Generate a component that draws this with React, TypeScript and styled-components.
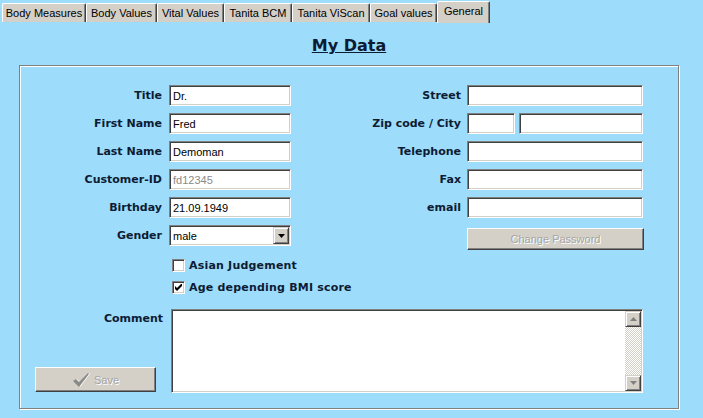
import React from 'react';
import styled, { createGlobalStyle } from 'styled-components';

const BLUE = '#9ddcfa';
const FACE = '#d4d0c8';
const INK = '#0d1b34';

const Global = createGlobalStyle`
  html, body { margin: 0; padding: 0; background: ${BLUE}; }
  body { width: 703px; height: 418px; overflow: hidden; }
`;

const Window = styled.div`
  width: 703px;
  height: 418px;
  background: ${BLUE};
  display: flex;
  flex-direction: column;
  font-family: "Liberation Sans", Arial, sans-serif;
  font-size: 11px;
  color: #000;
`;

const TabBar = styled.div`
  display: flex;
  align-items: flex-start;
  height: 23px;
  padding-left: 2px;
  box-sizing: border-box;
`;

const Tab = styled.div<{ $w: number; $active?: boolean }>`
  width: ${p => p.$w}px;
  box-sizing: border-box;
  height: ${p => (p.$active ? 22 : 19)}px;
  margin-top: ${p => (p.$active ? 1 : 3)}px;
  padding-bottom: ${p => (p.$active ? 3 : 0)}px;
  background: ${FACE};
  border-top: 1px solid #fff;
  border-left: 1px solid #fff;
  border-right: 1px solid #404040;
  box-shadow: inset -1px 0 0 #808080;
  border-radius: 2px 2px 0 0;
  display: flex;
  align-items: center;
  justify-content: center;
  white-space: nowrap;
  font-size: 11px;
`;

const Panel = styled.div`
  flex: 1;
  display: flex;
  flex-direction: column;
  padding: 13px 24px 0 19px;
`;

const Heading = styled.h1`
  margin: 0;
  width: 660px;
  text-align: center;
  font: bold 16px/19px "DejaVu Sans", sans-serif;
  text-decoration: underline;
  color: ${INK};
`;

const GroupBox = styled.div`
  margin-top: 10px;
  width: 660px;
  height: 344px;
  box-sizing: border-box;
  border: 1px solid #808080;
  box-shadow: 1px 1px 0 #fff, inset 1px 1px 0 #fff;
  padding-top: 19px;
  display: flex;
  flex-direction: column;
`;

const FieldsGrid = styled.div`
  display: grid;
  grid-template-columns: 149px 122px 176px 176px;
  grid-auto-rows: 21px;
  row-gap: 7px;
`;

const Label = styled.div<{ $pad: number }>`
  display: flex;
  align-items: center;
  justify-content: flex-end;
  padding-right: ${p => p.$pad}px;
  font: bold 11px "DejaVu Sans", sans-serif;
  color: ${INK};
  white-space: nowrap;
`;

const Sunken = styled.div<{ $w?: number; $disabled?: boolean }>`
  box-sizing: border-box;
  height: 21px;
  width: ${p => (p.$w ? `${p.$w}px` : '100%')};
  background: #fff;
  border: 1px solid;
  border-color: #808080 #fff #fff #808080;
  box-shadow: inset 1px 1px 0 #404040, inset -1px -1px 0 ${FACE};
  display: flex;
  align-items: center;
  padding-left: 3px;
  color: ${p => (p.$disabled ? '#8a8a8a' : '#000')};
  font-size: 11px;
  overflow: hidden;
`;

const Pair = styled.div`
  display: flex;
  gap: 4px;
`;

const DropButton = styled.div`
  margin-left: auto;
  margin-right: 1px;
  width: 16px;
  height: 17px;
  box-sizing: border-box;
  background: ${FACE};
  border: 1px solid;
  border-color: ${FACE} #404040 #404040 ${FACE};
  box-shadow: inset 1px 1px 0 #fff, inset -1px -1px 0 #808080;
  display: flex;
  align-items: center;
  justify-content: center;
`;

const Button = styled.div<{ $w: number; $h: number }>`
  box-sizing: border-box;
  width: ${p => p.$w}px;
  height: ${p => p.$h}px;
  background: ${FACE};
  border: 1px solid;
  border-color: #fff #404040 #404040 #fff;
  box-shadow: inset -1px -1px 0 #808080;
  display: flex;
  align-items: center;
  justify-content: center;
  gap: 4px;
  color: #a8a49e;
  text-shadow: 1px 1px 0 #fff;
  font-size: 11px;
`;

const PasswordButton = styled(Button)`
  margin-top: 3px;
`;

const Options = styled.div`
  margin-top: 12px;
  padding-left: 152px;
  display: flex;
  flex-direction: column;
  gap: 7px;
`;

const Option = styled.label`
  display: flex;
  align-items: center;
  gap: 4px;
  height: 15px;
  font: bold 11px "DejaVu Sans", sans-serif;
  letter-spacing: 0.2px;
  color: ${INK};
`;

const CheckBox = styled.span`
  box-sizing: border-box;
  width: 13px;
  height: 13px;
  background: #fff;
  border: 1px solid;
  border-color: #808080 #fff #fff #808080;
  box-shadow: inset 1px 1px 0 #404040, inset -1px -1px 0 ${FACE};
  display: flex;
  align-items: center;
  justify-content: center;
`;

const CommentRow = styled.div`
  margin-top: 14px;
  display: grid;
  grid-template-columns: 151px 472px;
  height: 84px;
`;

const CommentSide = styled.div`
  display: flex;
  flex-direction: column;
  justify-content: space-between;
`;

const CommentLabel = styled(Label)`
  align-self: stretch;
  padding-top: 3px;
`;

const SaveButton = styled(Button)`
  margin-left: 15px;
  margin-bottom: 1px;
`;

const TextArea = styled.div`
  box-sizing: border-box;
  height: 84px;
  background: #fff;
  border: 1px solid;
  border-color: #808080 #fff #fff #808080;
  box-shadow: inset 1px 1px 0 #404040, inset -1px -1px 0 ${FACE};
  display: flex;
  justify-content: flex-end;
  padding: 1px;
`;

const ScrollBar = styled.div`
  width: 16px;
  display: flex;
  flex-direction: column;
  background: repeating-conic-gradient(${FACE} 0 25%, #fff 0 50%) 0 0 / 2px 2px;
`;

const ScrollTrack = styled.div`
  flex: 1;
`;

const ScrollButton = styled.div`
  box-sizing: border-box;
  width: 16px;
  height: 16px;
  background: ${FACE};
  border: 1px solid;
  border-color: ${FACE} #404040 #404040 ${FACE};
  box-shadow: inset 1px 1px 0 #fff, inset -1px -1px 0 #808080;
  display: flex;
  align-items: center;
  justify-content: center;
`;

const Arrow = ({ dir, color = '#000' }: { dir: 'up' | 'down'; color?: string }) => (
  <svg width="7" height="4" viewBox="0 0 7 4">
    {dir === 'down' ? (
      <polygon points="0,0 7,0 3.5,4" fill={color} />
    ) : (
      <polygon points="0,4 7,4 3.5,0" fill={color} />
    )}
  </svg>
);

const Tick = () => (
  <svg width="7" height="7" viewBox="0 0 7 7">
    <path d="M0 2 L2 4 L7 -1 L7 2 L2 7 L0 5 Z" fill="#000" />
  </svg>
);

const SaveTick = () => (
  <svg width="18" height="14" viewBox="0 0 18 14">
    <path d="M1 8 L4 6 L7 9 L16 0 L17 1 L7 14 Z" fill="#fff" transform="translate(1,0)" />
    <path d="M1 8 L4 6 L7 9 L16 0 L17 1 L7 14 Z" fill="#8a8a8a" />
  </svg>
);

const tabs: { name: string; w: number }[] = [
  { name: 'Body Measures', w: 84 },
  { name: 'Body Values', w: 71 },
  { name: 'Vital Values', w: 67 },
  { name: 'Tanita BCM', w: 68 },
  { name: 'Tanita ViScan', w: 78 },
  { name: 'Goal values', w: 67 },
];

export default function App() {
  return (
    <>
      <Global />
      <Window>
        <TabBar>
          {tabs.map(t => (
            <Tab key={t.name} $w={t.w}>{t.name}</Tab>
          ))}
          <Tab $w={53} $active>General</Tab>
        </TabBar>
        <Panel>
          <Heading>My Data</Heading>
          <GroupBox>
            <FieldsGrid>
              <Label $pad={7}>Title</Label>
              <Sunken>Dr.</Sunken>
              <Label $pad={6}>Street</Label>
              <Sunken />

              <Label $pad={7}>First Name</Label>
              <Sunken>Fred</Sunken>
              <Label $pad={6}>Zip code / City</Label>
              <Pair>
                <Sunken $w={48} />
                <Sunken $w={124} />
              </Pair>

              <Label $pad={7}>Last Name</Label>
              <Sunken>Demoman</Sunken>
              <Label $pad={6}>Telephone</Label>
              <Sunken />

              <Label $pad={7}>Customer-ID</Label>
              <Sunken $disabled>fd12345</Sunken>
              <Label $pad={6}>Fax</Label>
              <Sunken />

              <Label $pad={7}>Birthday</Label>
              <Sunken>21.09.1949</Sunken>
              <Label $pad={6}>email</Label>
              <Sunken />

              <Label $pad={7}>Gender</Label>
              <Sunken>
                male
                <DropButton><Arrow dir="down" /></DropButton>
              </Sunken>
              <div />
              <PasswordButton $w={177} $h={22}>Change Password</PasswordButton>
            </FieldsGrid>

            <Options>
              <Option><CheckBox /> Asian Judgement</Option>
              <Option><CheckBox><Tick /></CheckBox> Age depending BMI score</Option>
            </Options>

            <CommentRow>
              <CommentSide>
                <CommentLabel $pad={8}>Comment</CommentLabel>
                <SaveButton $w={121} $h={25}><SaveTick />Save</SaveButton>
              </CommentSide>
              <TextArea>
                <ScrollBar>
                  <ScrollButton><Arrow dir="up" color="#808080" /></ScrollButton>
                  <ScrollTrack />
                  <ScrollButton><Arrow dir="down" color="#808080" /></ScrollButton>
                </ScrollBar>
              </TextArea>
            </CommentRow>
          </GroupBox>
        </Panel>
      </Window>
    </>
  );
}
